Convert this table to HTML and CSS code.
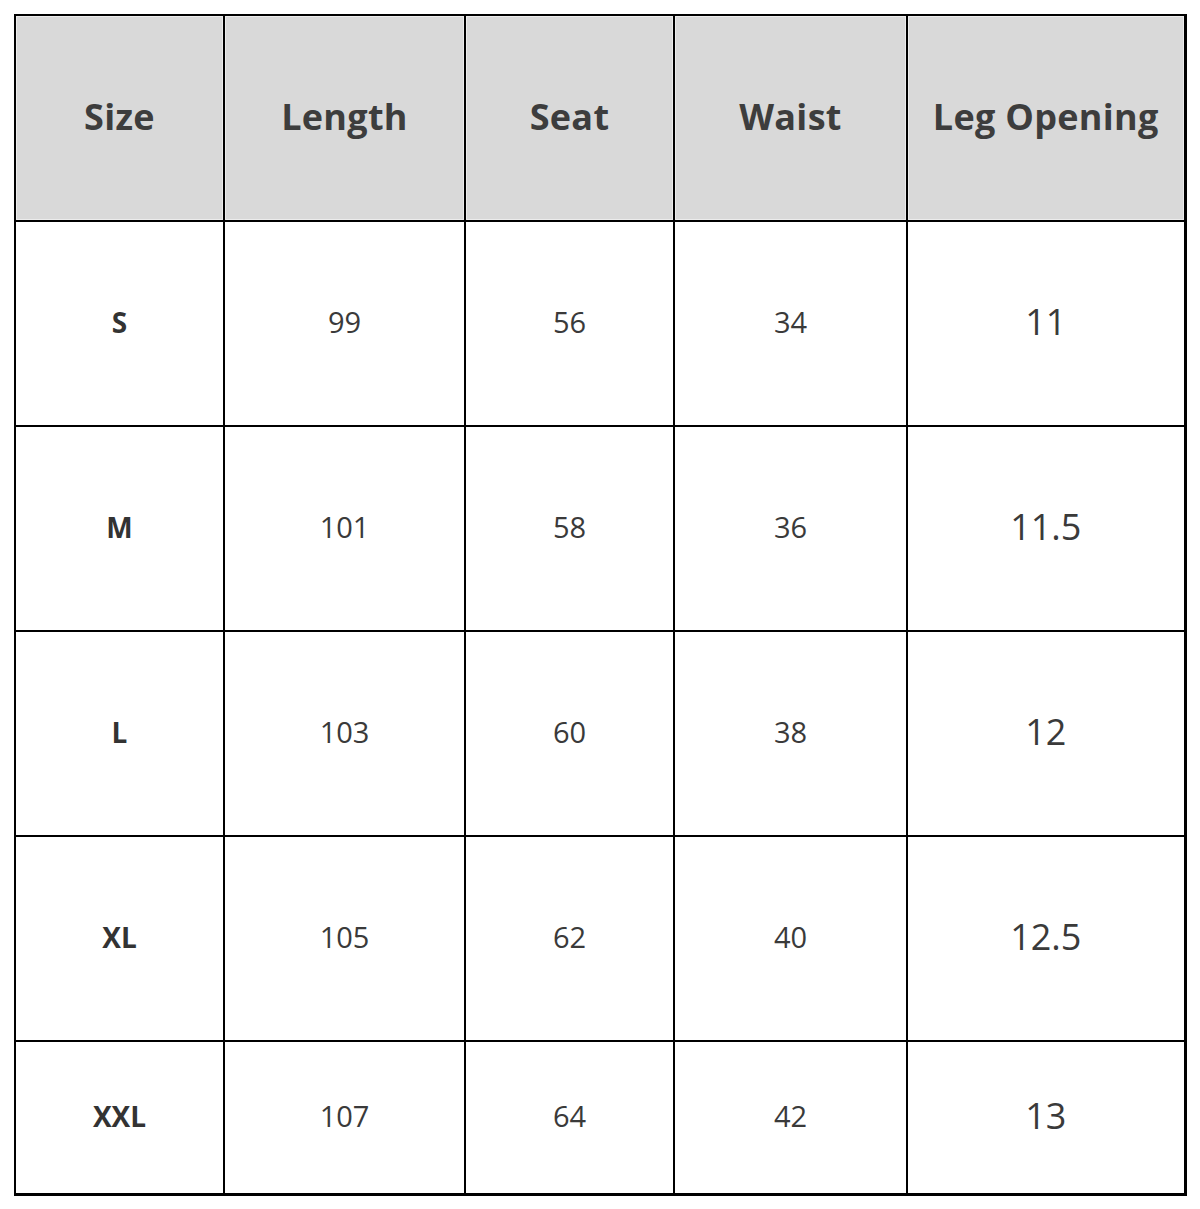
FILE: index.html
```html
<!DOCTYPE html>
<html>
<head>
<meta charset="utf-8">
<link rel="stylesheet" href="styles.css">
</head>
<body>
<table class="size-table">
  <colgroup>
    <col class="c1"><col class="c2"><col class="c3"><col class="c4"><col class="c5">
  </colgroup>
  <thead>
    <tr class="head">
      <th>Size</th><th>Length</th><th>Seat</th><th>Waist</th><th>Leg Opening</th>
    </tr>
  </thead>
  <tbody>
    <tr class="row"><td class="sz">S</td><td>99</td><td>56</td><td>34</td><td class="big">11</td></tr>
    <tr class="row"><td class="sz">M</td><td>101</td><td>58</td><td>36</td><td class="big">11.5</td></tr>
    <tr class="row"><td class="sz">L</td><td>103</td><td>60</td><td>38</td><td class="big">12</td></tr>
    <tr class="row"><td class="sz">XL</td><td>105</td><td>62</td><td>40</td><td class="big">12.5</td></tr>
    <tr class="row last"><td class="sz">XXL</td><td>107</td><td>64</td><td>42</td><td class="big">13</td></tr>
  </tbody>
</table>
</body>
</html>
```
FILE: styles.css
```css
html, body {
  margin: 0;
  padding: 0;
  background: #ffffff;
}
body {
  padding: 14px 0 0 14px;
  font-family: "Open Sans", "Noto Sans", "Liberation Sans", sans-serif;
  color: #3a3a3a;
}
.size-table {
  border-collapse: collapse;
  table-layout: fixed;
  width: 1170px;
  border-top: 2px solid #000;
  border-left: 2px solid #000;
  border-right: 3px solid #000;
  border-bottom: 3px solid #000;
}
.c1 { width: 209px; }
.c2 { width: 241px; }
.c3 { width: 209px; }
.c4 { width: 233px; }
.c5 { width: 278px; }
.size-table th,
.size-table td {
  border: 2px solid #000;
  text-align: center;
  vertical-align: middle;
  padding: 0 0 4px 0;
}
.head th {
  background: #d9d9d9;
  box-shadow: inset 0 0 0 1px #ececec;
  font-size: 36px;
  font-weight: 700;
  letter-spacing: 0.3px;
  color: #3d3d3d;
  height: 200px;
}
.row td {
  height: 199px;
  font-size: 29px;
  font-weight: 400;
  color: #3a3a3a;
}
.row.last td {
  height: 147px;
}
.row td.sz {
  font-weight: 700;
  font-size: 28px;
  color: #333;
}
.row td.big {
  font-size: 36px;
}
```
